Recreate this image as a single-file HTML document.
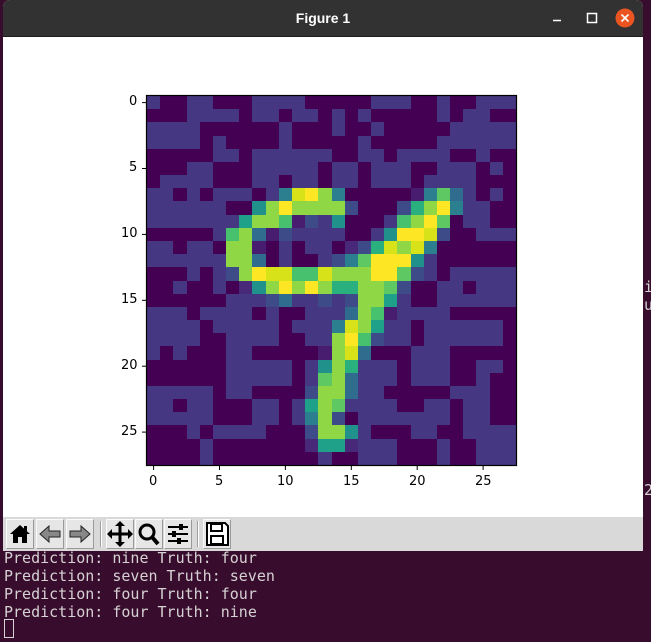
<!DOCTYPE html>
<html><head><meta charset="utf-8"><style>
*{margin:0;padding:0;box-sizing:border-box}
body{width:651px;height:642px;overflow:hidden;background:#380c2c;position:relative;font-family:"Liberation Sans","DejaVu Sans",sans-serif}
#win{position:absolute;left:3px;top:0;width:640px;height:551px;background:#fff;border-radius:7px 7px 0 0;overflow:hidden}
#title{position:absolute;left:0;top:0;width:640px;height:37px;background:#323232;border-bottom:1px solid #1e1e1e;color:#fff;font-weight:bold;font-size:14px;text-align:center;line-height:36px}
#grid{position:absolute;left:144px;top:96px;width:369px;height:369px;display:grid;grid-template-columns:repeat(28,1fr);grid-template-rows:repeat(28,1fr)}
#tb{position:absolute;left:0;top:517px;width:640px;height:34px;background:#d9d9d9}
.b{position:absolute;top:2px;width:28px;height:30px;background:#e6e6e6;border:1px solid #fafafa;border-right-color:#9a9a9a;border-bottom-color:#9a9a9a}
.sep{position:absolute;top:4px;width:2px;height:26px;border-left:1px solid #a0a0a0;border-right:1px solid #fff}
.t{position:absolute;left:4px;font-family:"DejaVu Sans Mono","Liberation Mono",monospace;font-size:15px;color:#d6d2d4;line-height:18px;white-space:pre}
.tk{position:absolute;font-size:13px;color:#000;font-family:"DejaVu Sans","Liberation Sans",sans-serif}
</style></head><body>
<div id="win">
<div id="title">Figure 1</div>
<svg style="position:absolute;left:0;top:0" width="640" height="37">
<line x1="550" y1="20.5" x2="558" y2="20.5" stroke="#fff" stroke-width="1.5"/>
<rect x="584.5" y="13.5" width="9" height="9" fill="none" stroke="#fff" stroke-width="1.5"/>
<circle cx="622" cy="18" r="9.5" fill="#e95420"/>
<path d="M618.5 14.5L625.5 21.5M625.5 14.5L618.5 21.5" stroke="#fff" stroke-width="1.6"/>
</svg>
<div id="grid"></div>
<svg style="position:absolute;left:0;top:0" width="640" height="517">
<rect x="143.5" y="95.5" width="370" height="370" fill="none" stroke="#000" stroke-width="1.2"/>
<g stroke="#000" stroke-width="1">
<line x1="150.6" y1="466" x2="150.6" y2="470"/><line x1="216.5" y1="466" x2="216.5" y2="470"/><line x1="282.4" y1="466" x2="282.4" y2="470"/><line x1="348.3" y1="466" x2="348.3" y2="470"/><line x1="414.2" y1="466" x2="414.2" y2="470"/><line x1="480.1" y1="466" x2="480.1" y2="470"/>
<line x1="139" y1="102.6" x2="143" y2="102.6"/><line x1="139" y1="168.5" x2="143" y2="168.5"/><line x1="139" y1="234.4" x2="143" y2="234.4"/><line x1="139" y1="300.3" x2="143" y2="300.3"/><line x1="139" y1="366.2" x2="143" y2="366.2"/><line x1="139" y1="432.1" x2="143" y2="432.1"/>
</g>
</svg>
<div class="tk" style="left:146px;top:474px">0</div>
<div class="tk" style="left:212px;top:474px">5</div>
<div class="tk" style="left:274px;top:474px">10</div>
<div class="tk" style="left:340px;top:474px">15</div>
<div class="tk" style="left:406px;top:474px">20</div>
<div class="tk" style="left:472px;top:474px">25</div>
<div class="tk" style="left:126px;top:94px">0</div>
<div class="tk" style="left:126px;top:160px">5</div>
<div class="tk" style="left:118px;top:226px">10</div>
<div class="tk" style="left:118px;top:292px">15</div>
<div class="tk" style="left:118px;top:358px">20</div>
<div class="tk" style="left:118px;top:424px">25</div>
<div id="tb">
<div class="b" style="left:3px"><svg width="26" height="28"><path d="M13 5L3 14h3v9h5v-6h4v6h5v-9h3z" fill="#000"/><rect x="17" y="6" width="3" height="5" fill="#000"/></svg></div>
<div class="b" style="left:33px"><svg width="26" height="28"><path d="M3 14l9-8v5h11v6H12v5z" fill="#888" stroke="#222" stroke-width="1"/></svg></div>
<div class="b" style="left:63px"><svg width="26" height="28"><path d="M23 14l-9-8v5H3v6h11v5z" fill="#888" stroke="#222" stroke-width="1"/></svg></div>
<div class="sep" style="left:97px"></div>
<div class="b" style="left:103px"><svg width="26" height="28"><path d="M13 3v22M2 14h22" stroke="#000" stroke-width="3"/><path d="M13 1l-5 5h10zM13 27l-5-5h10zM0 14l5-5v10zM26 14l-5-5v10z" fill="#000"/></svg></div>
<div class="b" style="left:132px"><svg width="26" height="28"><circle cx="11" cy="12" r="7" fill="none" stroke="#000" stroke-width="3"/><path d="M16 17l6 7" stroke="#000" stroke-width="4"/></svg></div>
<div class="b" style="left:161px"><svg width="26" height="28"><path d="M3 7h20M3 14h20M3 21h20" stroke="#000" stroke-width="2"/><rect x="14" y="4" width="4" height="6" fill="#000"/><rect x="7" y="11" width="4" height="6" fill="#000"/><rect x="12" y="18" width="4" height="6" fill="#000"/></svg></div>
<div class="sep" style="left:194px"></div>
<div class="b" style="left:200px"><svg width="26" height="28"><path d="M3 3h18l3 3v19H3z" fill="#fff" stroke="#000" stroke-width="2"/><rect x="7" y="4" width="11" height="7" fill="none" stroke="#000" stroke-width="2"/><rect x="7" y="16" width="12" height="8" fill="none" stroke="#000" stroke-width="2"/></svg></div>
</div>
</div>
<div class="t" style="top:549px">Prediction: nine Truth: four</div>
<div class="t" style="top:567px">Prediction: seven Truth: seven</div>
<div class="t" style="top:585px">Prediction: four Truth: four</div>
<div class="t" style="top:603px">Prediction: four Truth: nine</div>
<div style="position:absolute;left:4px;top:619px;width:10px;height:19px;border:1px solid #d6d2d4"></div>
<div class="t" style="left:644px;top:278px">i</div>
<div class="t" style="left:644px;top:296px">u</div>
<div class="t" style="left:644px;top:481px">2</div>
<script>
var rows=[
"PDDPPDDDPPPPDDDDDPPPDDPDDPPP",
"DDDPPPPDPPDPPDPDPDDDDDPDPPDD",
"PPPPDDDDDDPDDDPDDPDDDDDPPPPP",
"PPPPDPDDDDPDDDDDPDDDDDPPPPPP",
"DDDDDPPDPPPPPPDDPPDPPPPDDPDD",
"DDDPPDDDPPPPPDPPDPPPDDPPPDPD",
"DPPPPDDDPPDPPDPPDPPPDPPPPDDD",
"PPDPDPPPDPayYgaDDDDDpamcPDPD",
"PPPPPPDDtgYggggbDDDbngYaPPDD",
"PPPPPPPTggepbPtDDDPegYmDPPDD",
"DDDDDPegcpbPPPPDDPtYYybDDPPP",
"PPDPPDggpDPDPPDqbnygyaDDDDDD",
"PPPPPPggcDPDDPbamYYYtPDDDDDD",
"DDDPDPbgYyyeeygggYYmbPDPPPPP",
"DDPDDPDqtgYgYgnnggmbDDPPDPPP",
"DDDDDDPPPbcPPbPbggTPDDPPPPPP",
"PPPDPPPPDPDDPPPcgepPPPPDDDDD",
"PPPPDPPPPPDPPPaygTPPDPPPPPPD",
"PPPPDDPPPPDDPPgYebPPDPPPPPPD",
"PDPDDDPPDDDDDpgycDDDPPPDDDDD",
"DDDDDDPPPPPDPtgnPPPDPPPDDPPD",
"DDDDDDPPPPPDPmgcPPPDPPPDDPDD",
"PPPPPDPPDDDDbggcPPDDDDDPPPDD",
"PPDPPDDDPPDPTgmPPPPDDPPDPPDD",
"PPPPPDDDPPDPagbDPPPPPPPDPPDD",
"DDDPDPPPPDDDbggtPDDDPPDDPPPP",
"DDDDPDDDDDDDqTTqPPPDDDPDDPPP",
"DDDDPDDDDDDDDPDDPPPDDDPDDPPP"];
var c={D:"#440154",P:"#453781",a:"#2c7f8e",t:"#21918c",T:"#1fa088",g:"#8fd744",Y:"#fde725",y:"#d8e219",e:"#48c16e",m:"#5ec962",n:"#2ab07f",b:"#3d4c89",c:"#2f6c8e",p:"#481c6e",q:"#482878"};
var g=document.getElementById("grid"),h="";
for(var i=0;i<28;i++)for(var j=0;j<28;j++)h+='<div style="background:'+c[rows[i][j]]+'"></div>';
g.innerHTML=h;
</script>
</body></html>
